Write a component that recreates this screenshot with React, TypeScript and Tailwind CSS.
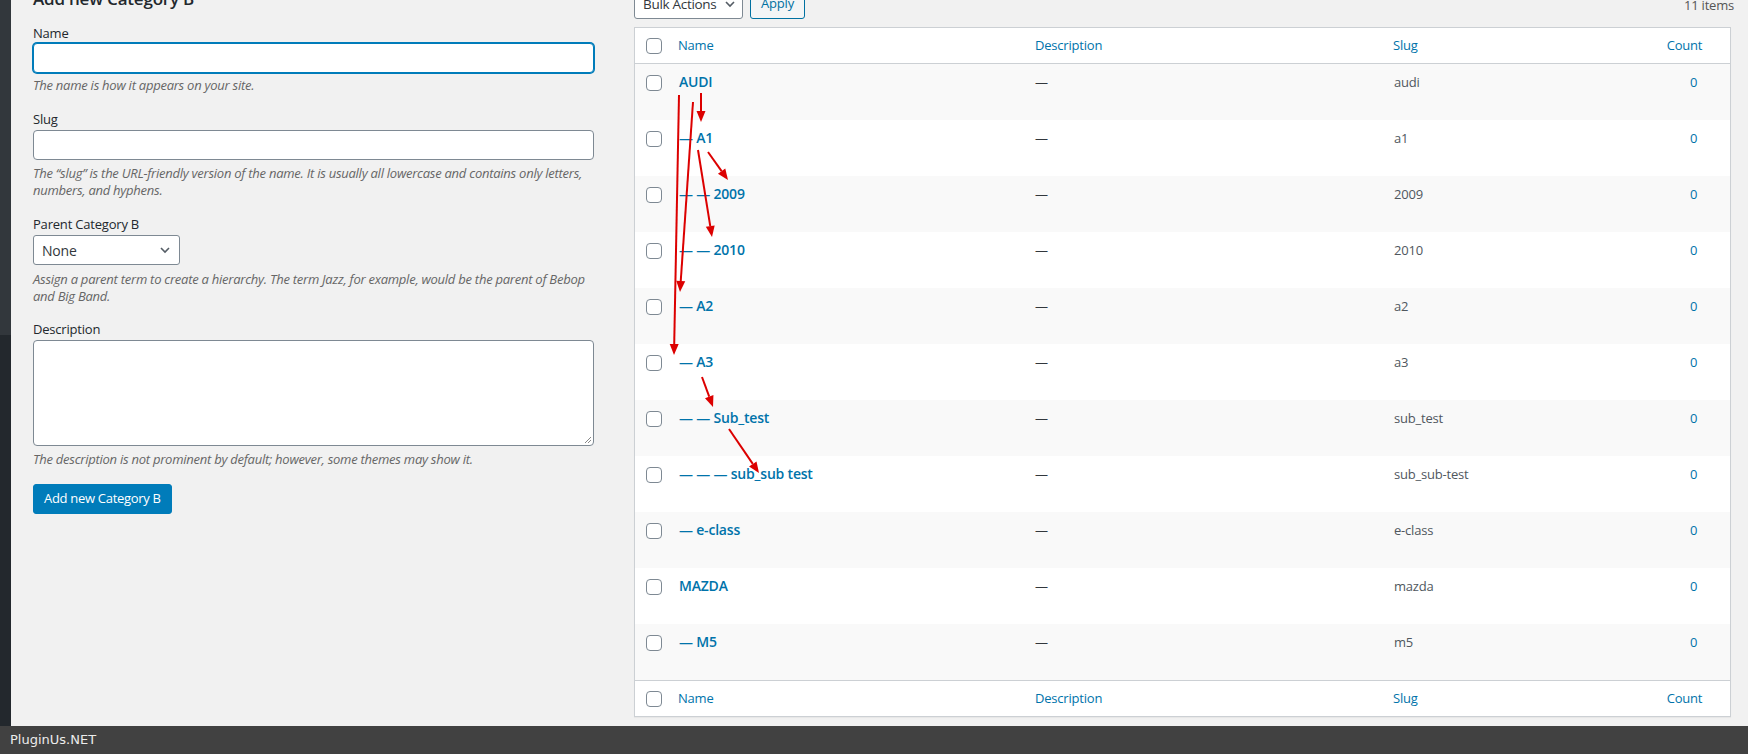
import React from 'react';

type Term = { name: string; depth: number; slug: string };

const terms: Term[] = [
  { name: 'AUDI', depth: 0, slug: 'audi' },
  { name: 'A1', depth: 1, slug: 'a1' },
  { name: '2009', depth: 2, slug: '2009' },
  { name: '2010', depth: 2, slug: '2010' },
  { name: 'A2', depth: 1, slug: 'a2' },
  { name: 'A3', depth: 1, slug: 'a3' },
  { name: 'Sub_test', depth: 2, slug: 'sub_test' },
  { name: 'sub_sub test', depth: 3, slug: 'sub_sub-test' },
  { name: 'e-class', depth: 1, slug: 'e-class' },
  { name: 'MAZDA', depth: 0, slug: 'mazda' },
  { name: 'M5', depth: 1, slug: 'm5' },
];

// annotation arrows drawn over the list (start -> tip)
const arrows = [
  [701, 93, 701, 122],
  [679, 95, 674, 355],
  [693, 102, 680, 292],
  [708, 152, 728, 180],
  [698, 150, 712, 237],
  [702, 377, 713, 407],
  [729, 429, 759, 473],
];

const cols = 'grid grid-cols-[34px_356px_358px_274px_73px]';

function Checkbox() {
  return <span className="block w-4 h-4 rounded-[4px] border border-[#7e8993] bg-white" />;
}

function Chevron() {
  return (
    <svg width="16" height="16" viewBox="0 0 20 20" fill="none" className="shrink-0">
      <path d="M5 7.5l5 5 5-5" stroke="#555d66" strokeWidth="2" />
    </svg>
  );
}

function Arrow({ x1, y1, x2, y2 }: { x1: number; y1: number; x2: number; y2: number }) {
  const len = Math.hypot(x2 - x1, y2 - y1);
  const ux = (x2 - x1) / len;
  const uy = (y2 - y1) / len;
  const bx = x2 - ux * 11;
  const by = y2 - uy * 11;
  const hw = 4.5;
  return (
    <g>
      <line x1={x1} y1={y1} x2={bx} y2={by} stroke="#dc0000" strokeWidth="2" />
      <polygon
        points={`${x2},${y2} ${bx - uy * hw},${by + ux * hw} ${bx + uy * hw},${by - ux * hw}`}
        fill="#dc0000"
      />
    </g>
  );
}

function HeadRow({ top }: { top?: boolean }) {
  return (
    <div className={`${cols} h-[36px] items-center text-[13px] text-[#0073aa] bg-white ${top ? 'border-b pt-[1px]' : 'border-t'} border-[#ccd0d4]`}>
      <div className="pl-[11px]"><Checkbox /></div>
      <div className="pl-[9px]">Name</div>
      <div className="pl-[10px]">Description</div>
      <div className="pl-[10px]">Slug</div>
      <div className="text-center pr-[18px]">Count</div>
    </div>
  );
}

const help = 'leading-[17px] italic text-[#666] tracking-[-0.25px] whitespace-nowrap';

export default function App() {
  return (
    <div className="relative w-[1748px] h-[754px] overflow-hidden bg-[#f1f1f1] font-['Open_Sans',sans-serif] text-[13px] tracking-[-0.2px] text-[#32373c]">
      <div className="flex h-[726px]">
        {/* admin menu edge */}
        <div className="w-[11px] flex flex-col shrink-0">
          <div className="h-[335px] bg-[#32373c]" />
          <div className="flex-1 bg-[#23282d]" />
        </div>

        <div className="flex flex-1 gap-[40px] pl-[22px] pr-[17px] -mt-[14px]">
          {/* Add form */}
          <div className="w-[561px] shrink-0 text-[#23282d]">
            <h2 className="h-[26px] leading-[26px] text-[17px] font-semibold">Add new Category B</h2>

            <div className="mt-[11px] leading-[20px]">Name</div>
            <div className="h-[30px] rounded-[4px] border border-[#007cba] shadow-[0_0_0_1px_#007cba] bg-white" />
            <p className={`mt-[4px] ${help}`}>The name is how it appears on your site.</p>

            <div className="mt-[15px] leading-[20px]">Slug</div>
            <div className="mt-[1px] h-[30px] rounded-[4px] border border-[#7e8993] bg-white" />
            <p className={`mt-[5px] ${help}`}>
              The “slug” is the URL-friendly version of the name. It is usually all lowercase and contains only letters,
              <br />
              numbers, and hyphens.
            </p>

            <div className="mt-[15px] leading-[20px]">Parent Category B</div>
            <div className="mt-[1px] h-[30px] w-[147px] rounded-[3px] border border-[#7e8993] bg-white flex items-center justify-between pl-[8px] pr-[6px] text-[14px] text-[#32373c]">
              <span>None</span>
              <Chevron />
            </div>
            <p className={`mt-[6px] ${help}`}>
              Assign a parent term to create a hierarchy. The term Jazz, for example, would be the parent of Bebop
              <br />
              and Big Band.
            </p>

            <div className="mt-[14px] leading-[20px]">Description</div>
            <div className="relative mt-[1px] h-[106px] rounded-[4px] border border-[#7e8993] bg-white">
              <svg className="absolute right-[1px] bottom-[1px]" width="9" height="9" viewBox="0 0 9 9">
                <path d="M8 2L2 8M8 5L5 8" stroke="#888" strokeWidth="1" />
              </svg>
            </div>
            <p className={`mt-[5px] ${help}`}>
              The description is not prominent by default; however, some themes may show it.
            </p>

            <button className="mt-[16px] h-[30px] px-[10px] rounded-[3px] bg-[#007cba] border border-[#007cba] text-white text-[13px] tracking-[-0.3px] whitespace-nowrap">
              Add new Category B
            </button>
          </div>

          {/* List table */}
          <div className="flex-1 pt-[3px]">
            <div className="flex items-center h-[30px]">
              <div className="h-[30px] w-[109px] rounded-[3px] border border-[#7e8993] bg-white flex items-center justify-between pl-[8px] pr-[4px] text-[13.5px] tracking-[-0.3px] whitespace-nowrap">
                <span>Bulk Actions</span>
                <Chevron />
              </div>
              <button className="ml-[7px] h-[30px] w-[55px] rounded-[3px] border border-[#0071a1] bg-[#f3f5f6] text-[#0071a1] text-[13px]">
                Apply
              </button>
              <span className="ml-auto -mr-[3px] pt-[4px] text-[#555]">11 items</span>
            </div>

            <div className="mt-[8px] border border-[#ccd0d4] shadow-[0_1px_1px_rgba(0,0,0,0.04)] bg-white">
              <HeadRow top />
              {terms.map((t, i) => (
                <div key={t.slug} className={`${cols} h-[56px] items-start ${i % 2 === 0 ? 'bg-[#f9f9f9]' : 'bg-white'}`}>
                  <div className="pl-[11px] pt-[11px]"><Checkbox /></div>
                  <div className="pl-[10px] pt-[8px] leading-[20px] text-[14px] font-semibold text-[#0073aa] whitespace-pre">
                    {'— '.repeat(t.depth) + t.name}
                  </div>
                  <div className="pl-[10px] pt-[8px] leading-[20px]">—</div>
                  <div className="pl-[11px] pt-[8px] leading-[20px] text-[#50575e]">{t.slug}</div>
                  <div className="pt-[8px] leading-[20px] text-center text-[#0073aa]">0</div>
                </div>
              ))}
              <HeadRow />
            </div>
          </div>
        </div>
      </div>

      <footer className="h-[28px] bg-[#414141] flex items-center pl-[10px] font-['DejaVu_Sans',sans-serif] text-[13px] tracking-normal text-[#ececec]">
        PluginUs.NET
      </footer>

      <svg className="absolute inset-0 pointer-events-none" width="1748" height="754">
        {arrows.map(([x1, y1, x2, y2], i) => (
          <Arrow key={i} x1={x1} y1={y1} x2={x2} y2={y2} />
        ))}
      </svg>
    </div>
  );
}
